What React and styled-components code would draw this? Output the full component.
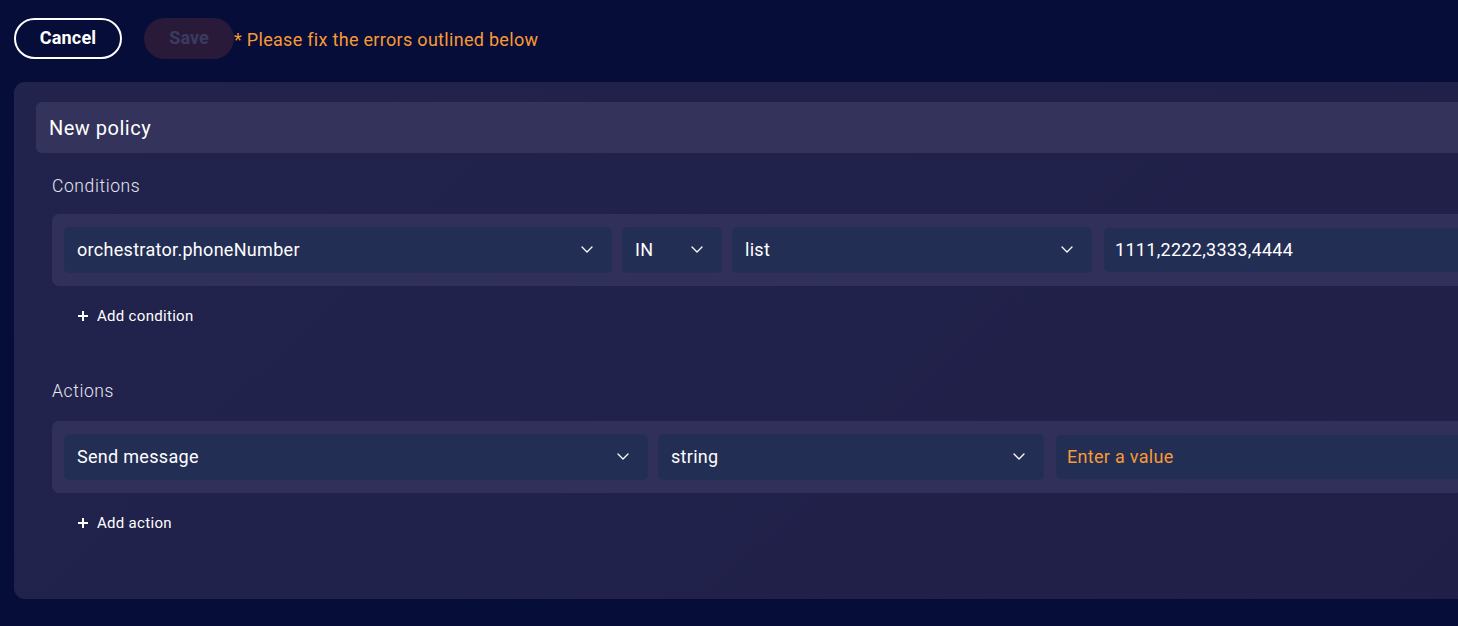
import styled, { createGlobalStyle } from "styled-components";

const GlobalStyle = createGlobalStyle`
  html, body {
    margin: 0;
    padding: 0;
    background: #070d39;
    overflow: hidden;
  }
  body {
    font-family: Roboto, "Liberation Sans", sans-serif;
    color: #ffffff;
  }
`;

const Chevron = () => (
  <svg width="12" height="7" viewBox="0 0 12 7" fill="none">
    <path d="M1 1l5 5 5-5" stroke="#ffffff" strokeWidth="1.3" strokeLinecap="round" strokeLinejoin="round" />
  </svg>
);

const Plus = () => (
  <svg width="10" height="10" viewBox="0 0 10 10" fill="none">
    <path d="M5 0v10M0 5h10" stroke="#ffffff" strokeWidth="2" />
  </svg>
);

const Select = ({ value, width }) => (
  <StyledSelect $width={width}>
    <span>{value}</span>
    <Chevron />
  </StyledSelect>
);

const App = () => {
  return (
    <>
      <GlobalStyle />
      <Page>
        <Toolbar>
          <CancelButton>Cancel</CancelButton>
          <SaveButton disabled>Save</SaveButton>
          <ErrorText>* Please fix the errors outlined below</ErrorText>
        </Toolbar>

        <Panel>
          <TitleBar>New policy</TitleBar>

          <Section>
            <SectionLabel>Conditions</SectionLabel>
            <RuleRow>
              <Select value="orchestrator.phoneNumber" width={548} />
              <Select value="IN" width={100} />
              <Select value="list" width={360} />
              <ValueInput>1111,2222,3333,4444</ValueInput>
            </RuleRow>
            <AddButton>
              <Plus />
              Add condition
            </AddButton>
          </Section>

          <Section $top={54}>
            <SectionLabel $gap={19}>Actions</SectionLabel>
            <RuleRow>
              <Select value="Send message" width={584} />
              <Select value="string" width={386} />
              <ValueInput $placeholder>Enter a value</ValueInput>
            </RuleRow>
            <AddButton>
              <Plus />
              Add action
            </AddButton>
          </Section>
        </Panel>
      </Page>
    </>
  );
};

export default App;

const Page = styled.div`
  padding: 18px 0 0 14px;
  width: 1800px;
`;

const Toolbar = styled.div`
  display: flex;
  align-items: center;
  height: 41px;
`;

const CancelButton = styled.button`
  box-sizing: border-box;
  width: 108px;
  height: 41px;
  border: 2px solid #ffffff;
  border-radius: 21px;
  background: transparent;
  color: #ffffff;
  font-family: Roboto, "Liberation Sans", sans-serif;
  font-size: 18px;
  font-weight: 700;
  letter-spacing: 0.2px;
  padding: 0 0 2px;
  cursor: pointer;
`;

const SaveButton = styled.button`
  margin-left: 22px;
  width: 90px;
  height: 41px;
  border: none;
  border-radius: 21px;
  background: #2a1a3a;
  color: #393c5f;
  font-family: Roboto, "Liberation Sans", sans-serif;
  font-size: 18px;
  font-weight: 700;
  padding: 0 0 2px;
`;

const ErrorText = styled.span`
  color: #f79a35;
  font-size: 18px;
  letter-spacing: 0.3px;
  line-height: 41px;
  margin-top: 2px;
`;

const Panel = styled.div`
  margin-top: 23px;
  box-sizing: border-box;
  height: 517px;
  padding: 20px 0 0 22px;
  border-radius: 11px;
  background: linear-gradient(135deg, #22234c 0%, #1f1f48 100%);
`;

const TitleBar = styled.div`
  height: 51px;
  display: flex;
  align-items: center;
  padding-left: 13px;
  border-radius: 6px;
  background: #33335b;
  font-size: 20px;
  letter-spacing: 0.5px;
  color: #ffffff;
`;

const Section = styled.div`
  display: flex;
  flex-direction: column;
  padding-left: 16px;
  margin-top: ${(p) => p.$top ?? 22}px;
`;

const SectionLabel = styled.div`
  font-size: 17.5px;
  font-weight: 300;
  letter-spacing: 0.6px;
  line-height: 22px;
  color: #e6e7f0;
  margin-bottom: ${(p) => p.$gap ?? 17}px;
`;

const RuleRow = styled.div`
  display: flex;
  align-items: center;
  gap: 10px;
  height: 72px;
  padding: 0 12px;
  border-radius: 7px;
  background: #31305a;
`;

const StyledSelect = styled.div`
  box-sizing: border-box;
  flex: none;
  width: ${(p) => p.$width}px;
  height: 46px;
  display: flex;
  align-items: center;
  justify-content: space-between;
  padding: 0 19px 2px 13px;
  border-radius: 5px;
  background: #232e55;
  font-size: 18px;
  letter-spacing: 0.3px;
  color: #ffffff;
`;

const ValueInput = styled.div`
  flex: none;
  width: 600px;
  height: 42px;
  margin-left: 2px;
  display: flex;
  align-items: center;
  padding: 0 0 2px 11px;
  border-radius: 5px;
  background: #232e55;
  font-size: 18px;
  letter-spacing: 0.3px;
  color: ${(p) => (p.$placeholder ? "#f79a35" : "#ffffff")};
`;

const AddButton = styled.div`
  display: flex;
  align-items: center;
  gap: 9px;
  margin-top: 20px;
  padding-left: 26px;
  height: 20px;
  font-size: 15px;
  letter-spacing: 0.3px;
  color: #ffffff;
  cursor: pointer;
`;
